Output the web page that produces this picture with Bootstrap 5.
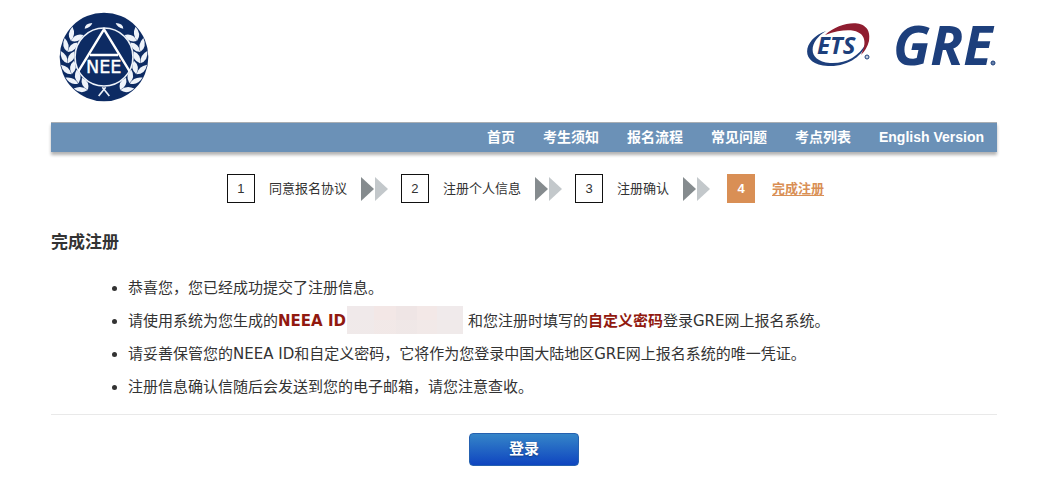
<!DOCTYPE html>
<html lang="zh-CN">
<head>
<meta charset="utf-8">
<meta name="viewport" content="width=device-width, initial-scale=1">
<title>完成注册 - GRE</title>
<link href="https://cdn.jsdelivr.net/npm/bootstrap@5.3.0/dist/css/bootstrap.min.css" rel="stylesheet">
<style>
body{font-family:"Liberation Sans","Noto Sans CJK SC",sans-serif;color:#333;background:#fff}
.page-wrap{padding:0 63px 20px 51px}
.masthead{height:122px;padding-left:8px}
.neea-logo{margin-top:12px}
.site-nav{background:#6b91b7;border-top:1px solid #a9aeb3;box-shadow:0 3px 3px rgba(0,0,0,.3);height:30px;padding:0 13px 2px;gap:28px;font-size:14px;line-height:20px;font-weight:700}
.site-nav a{color:#fff;text-decoration:none}
.steps{margin:22px 0 0;padding-left:3px;font-size:13px;line-height:20px}
.step-no{width:28px;height:29px;border:1px solid #111;margin-right:14px}
.step-arrow{width:27px;height:24px;margin:0 13px 0 14px}
.is-current{margin-left:4px;color:#d98f55;font-weight:700}
.is-current .step-no{background:#d98f55;border-color:#d98f55;color:#fff;margin-right:17px}
.is-current a{color:#d98f55;text-underline-offset:2px}
h1{font-size:17px;line-height:24px;font-weight:700;margin:28px 0 17px}
.notice{font-family:"DejaVu Sans","Noto Sans CJK SC",sans-serif;font-size:15px;line-height:33px;padding:0 0 10px 77px;margin:0;border-bottom:1px solid #e9e9e9}
.notice strong{color:#91190f}
.masked{display:inline-block;vertical-align:middle;width:116px;height:28px;margin:-4px 5px 0 1px;background:linear-gradient(transparent 50%,rgba(240,234,233,.5) 50%),linear-gradient(90deg,#f0e9ea 0 23%,#f3e7e6 23% 42%,#efe5e5 42% 60%,#f3e8e7 60% 78%,#f0eaeb 78%)}
.btn-login{width:110px;height:33px;margin-top:18px;padding:0 0 1px;border:1px solid #2561b0;border-radius:4px;background:linear-gradient(#3585c8,#0f45c0);color:#fff!important;font-size:15px;line-height:20px;font-weight:700;text-shadow:0 1px 2px rgba(0,0,0,.35)}
</style>
</head>
<body>
<div class="page-wrap">
  <header class="masthead d-flex justify-content-between align-items-start">
    <a class="neea-logo" href="#" aria-label="NEEA">
      <svg class="d-block" width="90" height="90" viewBox="28 20 270 270">
        <defs>
          <g id="leafpair" fill="#eef3fa">
            <path d="M54 174Q30 166 33 137Q56 149 54 174Z"/>
            <path d="M55 174Q50 148 74 138Q80 164 55 174Z"/>
          </g>
          <g id="branch">
            <use href="#leafpair" transform="rotate(-54 163 155)"/>
            <use href="#leafpair" transform="rotate(-36 163 155)"/>
            <use href="#leafpair" transform="rotate(-18 163 155)"/>
            <use href="#leafpair"/>
            <use href="#leafpair" transform="rotate(18 163 155)"/>
            <use href="#leafpair" transform="rotate(36 163 155)"/>
            <path d="M105 70Q106 54 128 53Q123 67 105 70Z" fill="#eef3fa"/>
            <path d="M147 272L168 246" fill="none" stroke="#eef3fa" stroke-width="5"/>
          </g>
        </defs>
        <circle cx="163" cy="155" r="133" fill="#0d2b63"/>
        <use href="#branch"/>
        <use href="#branch" transform="translate(326 0) scale(-1 1)"/>
        <circle cx="163" cy="155" r="87" fill="#0d2b63" stroke="#eef3fa" stroke-width="5"/>
        <path d="M86 198L163 72L240 198M121 149H205" fill="none" stroke="#fff" stroke-width="7"/>
        <text x="109" y="202" font-family="DejaVu Sans,sans-serif" font-size="53" fill="#fff" stroke="#fff" stroke-width="1">NEE</text>
      </svg>
    </a>
    <a href="#" aria-label="ETS GRE">
      <svg class="d-block" width="192" height="90" viewBox="807 0 192 90">
        <path d="M828 31C805 39 800 64 830 66C850 67 866 55 868 43C861 57 847 64 832 63C808 61 811 41 828 31Z" fill="#1d3f7c"/>
        <path d="M827 35C844 20 875 17 871 41Q869 49 863 55C873 36 862 23 827 35Z" fill="#8f1d30"/>
        <g font-family="Open Sans,sans-serif" font-style="italic" fill="#1d3f7c">
          <text x="819" y="54" font-size="24" font-weight="700">ETS</text>
          <text x="895" y="65" font-size="54" font-weight="700">GRE</text>
        </g>
        <circle cx="869" cy="57" r="2" fill="#c4cfdf" stroke="#1d3f7c" stroke-width="1"/>
        <circle cx="995" cy="63" r="2" fill="#6680a8" stroke="#1d3f7c" stroke-width="1"/>
      </svg>
    </a>
  </header>
  <nav class="site-nav d-flex justify-content-end align-items-center text-nowrap">
    <a href="#">首页</a><a href="#">考生须知</a><a href="#">报名流程</a><a href="#">常见问题</a><a href="#">考点列表</a><a href="#">English Version</a>
  </nav>
  <svg class="d-none"><symbol id="arrows" viewBox="0 0 27 24"><path d="M0 0L13 12L0 24Z" fill="#858b8e"/><path d="M14 0L27 12L14 24Z" fill="#c3c8cb"/></symbol></svg>
  <ol class="steps list-unstyled d-flex justify-content-center text-nowrap">
    <li class="d-flex align-items-center"><span class="step-no d-flex align-items-center justify-content-center">1</span><span>同意报名协议</span><svg class="step-arrow"><use href="#arrows"/></svg></li>
    <li class="d-flex align-items-center"><span class="step-no d-flex align-items-center justify-content-center">2</span><span>注册个人信息</span><svg class="step-arrow"><use href="#arrows"/></svg></li>
    <li class="d-flex align-items-center"><span class="step-no d-flex align-items-center justify-content-center">3</span><span>注册确认</span><svg class="step-arrow"><use href="#arrows"/></svg></li>
    <li class="is-current d-flex align-items-center"><span class="step-no d-flex align-items-center justify-content-center">4</span><a href="#">完成注册</a></li>
  </ol>
  <main>
    <h1>完成注册</h1>
    <ul class="notice">
      <li>恭喜您，您已经成功提交了注册信息。</li>
      <li>请使用系统为您生成的<strong>NEEA ID</strong><span class="masked"></span>和您注册时填写的<strong>自定义密码</strong>登录GRE网上报名系统。</li>
      <li>请妥善保管您的NEEA ID和自定义密码，它将作为您登录中国大陆地区GRE网上报名系统的唯一凭证。</li>
      <li>注册信息确认信随后会发送到您的电子邮箱，请您注意查收。</li>
    </ul>
    <div class="text-center"><button type="button" class="btn btn-login">登录</button></div>
  </main>
</div>
<script src="https://cdn.jsdelivr.net/npm/bootstrap@5.3.0/dist/js/bootstrap.bundle.min.js"></script>
</body>
</html>
